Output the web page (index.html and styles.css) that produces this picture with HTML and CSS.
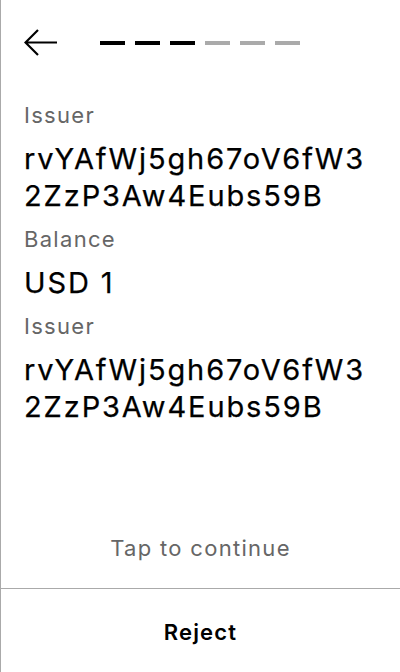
FILE: index.html
```html
<!DOCTYPE html>
<html>
<head>
<meta charset="utf-8">
<link rel="stylesheet" href="styles.css">
</head>
<body>
<div class="screen">
  <header class="top">
    <button class="back" aria-label="Back">
      <svg width="34" height="30" viewBox="0 0 34 30"><path d="M33 14.5H2M14 2L1.5 14.5L14 27" fill="none" stroke="#000" stroke-width="2.2"/></svg>
    </button>
    <div class="steps">
      <span class="step on"></span><span class="step on"></span><span class="step on"></span><span class="step"></span><span class="step"></span><span class="step"></span>
    </div>
  </header>
  <main class="fields">
    <div class="field">
      <div class="label">Issuer</div>
      <div class="value">rvYAfWj5gh67oV6fW32ZzP3Aw4Eubs59B</div>
    </div>
    <div class="field">
      <div class="label">Balance</div>
      <div class="value">USD 1</div>
    </div>
    <div class="field">
      <div class="label">Issuer</div>
      <div class="value">rvYAfWj5gh67oV6fW32ZzP3Aw4Eubs59B</div>
    </div>
  </main>
  <div class="tap">Tap to continue</div>
  <footer class="actions">
    <button class="reject">Reject</button>
  </footer>
</div>
</body>
</html>
```
FILE: styles.css
```css
* { box-sizing: border-box; }
html, body { margin: 0; padding: 0; background: #fff; }
body {
  font-family: Inter, "Noto Sans", sans-serif;
  color: #000;
}
.screen {
  width: 400px;
  height: 672px;
  border-left: 1px solid #aaa;
  display: flex;
  flex-direction: column;
}
.top {
  display: flex;
  align-items: center;
  height: 86px;
  padding: 0 0 0 23px;
}
.back {
  border: 0;
  background: none;
  padding: 0;
  width: 34px;
  height: 30px;
  display: flex;
}
.steps {
  display: flex;
  gap: 10px;
  margin-left: 42px;
}
.step {
  width: 25px;
  height: 4px;
  background: #aaa;
}
.step.on { background: #000; }
.fields {
  padding: 14px 26px 0 23px;
  flex: 1;
}
.label {
  font-size: 22px;
  line-height: 30px;
  letter-spacing: 1.3px;
  color: #666;
}
.value {
  font-size: 29px;
  line-height: 37px;
  letter-spacing: 1.9px;
  margin: 10px 0;
  word-break: break-all;
  -webkit-text-stroke: 0.25px #000;
}
.tap {
  text-align: center;
  font-size: 22px;
  line-height: 28px;
  letter-spacing: 1.3px;
  color: #666;
  padding-bottom: 26px;
}
.actions {
  border-top: 1px solid #aaa;
  height: 84px;
  padding-top: 2px;
  display: flex;
  align-items: center;
  justify-content: center;
}
.reject {
  border: 0;
  background: none;
  font-family: inherit;
  font-size: 22px;
  font-weight: 600;
  letter-spacing: 1.2px;
  color: #000;
}
```
